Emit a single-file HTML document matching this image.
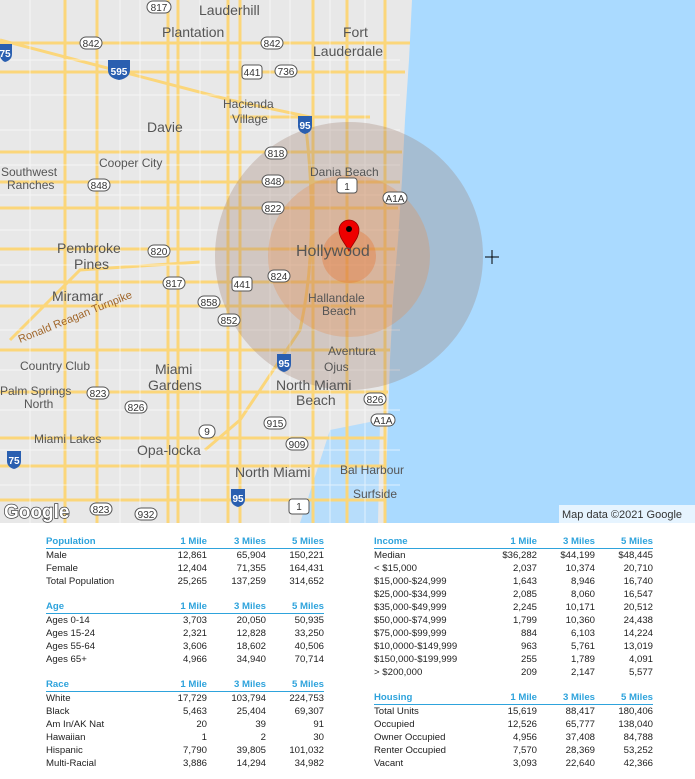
<!DOCTYPE html>
<html><head><meta charset="utf-8"><style>
body{margin:0;width:695px;height:779px;background:#fff;overflow:hidden;font-family:"Liberation Sans",sans-serif;position:relative}
svg text{font-family:"Liberation Sans",sans-serif}
.t{position:absolute;font-size:9.6px;color:#222;border-collapse:collapse}
.t td{padding:0;height:13px;line-height:13px;white-space:nowrap}
.t td.n{text-align:right}
.t tr.h td{color:#2ea3dc;font-weight:bold;border-bottom:1px solid #2ea3dc;height:12px}
.t tr.s td{height:12px}
</style></head><body>
<svg width="695" height="523" style="position:absolute;left:0;top:0" xmlns="http://www.w3.org/2000/svg">
<rect width="695" height="523" fill="#e8e8e8"/>
<path d="M412,0 L409,60 L405,120 L402,180 L398,240 L393,300 L390,360 L388,420 L386,480 L384,523 L695,523 L695,0Z" fill="#aadaff"/>
<path d="M330,430 L380,420 L378,523 L300,523 Z" fill="#aadaff" opacity=".8"/>
<g stroke="#fbd67a" stroke-width="3" fill="none">
<path d="M0,43 H410 M0,72 H405 M230,117 H370 M0,152 H402 M0,182 H400 M0,208 H398 M0,249 H395 M0,282 H393 M0,306 H392 M0,350 H390 M0,392 H388 M0,438 H386 M0,466 H386 M0,500 H385"/>
<path d="M65,0 V523 M168,0 V523 M228,0 V523 M240,0 V523 M313,0 V523 M347,0 V523 M385,0 V523 M97,0 V523 M178,0 V523"/>
<path d="M0,40 L230,100 L310,117 M305,120 Q320,240 300,330 L240,420 L240,523 M10,340 L80,270 L200,262 M240,420 L205,450"/>
</g>
<g stroke="#fff" stroke-width="1" opacity=".6" fill="none">
<path d="M0,60 H400 M0,95 H400 M0,130 H400 M0,165 H400 M0,195 H400 M0,230 H400 M0,265 H400 M0,330 H400 M0,370 H400 M0,410 H400 M0,450 H400 M0,485 H400 M30,0 V523 M120,0 V523 M140,0 V523 M200,0 V523 M270,0 V523 M290,0 V523 M330,0 V523 M365,0 V523"/>
</g>
<circle cx="349" cy="256" r="134" fill="#9a7a6a" opacity=".3"/>
<circle cx="349" cy="256" r="81" fill="#e88a4a" opacity=".3"/>
<circle cx="349" cy="256" r="27" fill="#e8702a" opacity=".35"/>
<circle cx="216" cy="256" r="0"/>
<path d="M349,251 C345,243 339,238 339,230 A10,10 0 0 1 359,230 C359,238 353,243 349,251Z" fill="#e00" stroke="#900" stroke-width=".8"/>
<circle cx="349" cy="229" r="3" fill="#000"/>
<path d="M492,250 V264 M485,257 H499" stroke="#000" stroke-width="1"/>
<g fill="#555" font-size="14">
<text x="199" y="15">Lauderhill</text>
<text x="162" y="37">Plantation</text>
<text x="343" y="37">Fort</text>
<text x="313" y="56">Lauderdale</text>
<text x="223" y="108" font-size="12">Hacienda</text>
<text x="232" y="123" font-size="12">Village</text>
<text x="147" y="132">Davie</text>
<text x="99" y="167" font-size="12">Cooper City</text>
<text x="1" y="176" font-size="12">Southwest</text>
<text x="7" y="189" font-size="12">Ranches</text>
<text x="310" y="176" font-size="12">Dania Beach</text>
<text x="296" y="256" font-size="16">Hollywood</text>
<text x="57" y="253">Pembroke</text>
<text x="74" y="269">Pines</text>
<text x="52" y="301">Miramar</text>
<text x="308" y="302" font-size="12">Hallandale</text>
<text x="322" y="315" font-size="12">Beach</text>
<text x="20" y="370" font-size="12">Country Club</text>
<text x="155" y="374">Miami</text>
<text x="148" y="390">Gardens</text>
<text x="328" y="355" font-size="12">Aventura</text>
<text x="324" y="371" font-size="12">Ojus</text>
<text x="276" y="390">North Miami</text>
<text x="296" y="405">Beach</text>
<text x="0" y="395" font-size="12">Palm Springs</text>
<text x="24" y="408" font-size="12">North</text>
<text x="34" y="443" font-size="12">Miami Lakes</text>
<text x="137" y="455">Opa-locka</text>
<text x="235" y="477">North Miami</text>
<text x="340" y="474" font-size="12">Bal Harbour</text>
<text x="353" y="498" font-size="12">Surfside</text>
<text x="20" y="343" font-size="11" fill="#a0662a" transform="rotate(-22 20 343)">Ronald Reagan Turnpike</text>
</g>
<g font-size="10" fill="#333" text-anchor="middle">
<g stroke="#555" fill="#fff" stroke-width="1">
<rect x="147" y="1" width="24" height="12" rx="6"/><rect x="80" y="37" width="22" height="12" rx="6"/><rect x="261" y="37" width="22" height="12" rx="6"/>
<rect x="275" y="65" width="22" height="12" rx="6"/><rect x="242" y="65" width="20" height="14" rx="3"/>
<rect x="265" y="147" width="22" height="12" rx="6"/><rect x="88" y="179" width="22" height="12" rx="6"/><rect x="262" y="175" width="22" height="12" rx="6"/><rect x="262" y="202" width="22" height="12" rx="6"/>
<rect x="148" y="245" width="22" height="12" rx="6"/><rect x="268" y="270" width="22" height="12" rx="6"/><rect x="232" y="277" width="20" height="14" rx="3"/><rect x="163" y="277" width="22" height="12" rx="6"/>
<rect x="198" y="296" width="22" height="12" rx="6"/><rect x="218" y="314" width="22" height="12" rx="6"/><rect x="337" y="178" width="20" height="15" rx="3"/><rect x="383" y="192" width="24" height="12" rx="6"/>
<rect x="87" y="387" width="22" height="12" rx="6"/><rect x="125" y="401" width="22" height="12" rx="6"/><rect x="364" y="393" width="22" height="12" rx="6"/><rect x="371" y="414" width="24" height="12" rx="6"/>
<rect x="264" y="417" width="22" height="12" rx="6"/><rect x="199" y="425" width="16" height="13" rx="6"/><rect x="286" y="438" width="22" height="12" rx="6"/><rect x="90" y="503" width="22" height="12" rx="6"/><rect x="135" y="508" width="22" height="12" rx="6"/><rect x="289" y="499" width="20" height="15" rx="3"/>
</g>
<text x="159" y="11">817</text><text x="91" y="47">842</text><text x="272" y="47">842</text><text x="286" y="75">736</text><text x="252" y="76">441</text>
<text x="276" y="157">818</text><text x="99" y="189">848</text><text x="273" y="185">848</text><text x="273" y="212">822</text>
<text x="159" y="255">820</text><text x="279" y="280">824</text><text x="242" y="288">441</text><text x="174" y="287">817</text>
<text x="209" y="306">858</text><text x="229" y="324">852</text><text x="347" y="190">1</text><text x="395" y="202">A1A</text>
<text x="98" y="397">823</text><text x="136" y="411">826</text><text x="375" y="403">826</text><text x="383" y="424">A1A</text>
<text x="275" y="427">915</text><text x="207" y="435">9</text><text x="297" y="448">909</text><text x="101" y="513">823</text><text x="146" y="518">932</text><text x="299" y="510">1</text>
</g>
<g font-size="10" fill="#fff" text-anchor="middle" font-weight="bold">
<path d="M108,60 h22 v10 q0,8 -11,10 q-11,-2 -11,-10z" fill="#2a5fb0"/><text x="119" y="75">595</text>
<path d="M298,116 h14 v10 q0,6 -7,8 q-7,-2 -7,-8z" fill="#2a5fb0"/><text x="305" y="129">95</text>
<path d="M277,354 h14 v10 q0,6 -7,8 q-7,-2 -7,-8z" fill="#2a5fb0"/><text x="284" y="367">95</text>
<path d="M231,489 h14 v10 q0,6 -7,8 q-7,-2 -7,-8z" fill="#2a5fb0"/><text x="238" y="502">95</text>
<path d="M7,451 h14 v10 q0,6 -7,8 q-7,-2 -7,-8z" fill="#2a5fb0"/><text x="14" y="464">75</text>
<path d="M0,44 h12 v10 q0,6 -7,8 q-5,-2 -5,-8z" fill="#2a5fb0"/><text x="5" y="57">75</text>
</g>
<text x="4" y="518" font-size="19" font-weight="bold" fill="#fff" stroke="#444" stroke-width="1.5" paint-order="stroke">Google</text>
<rect x="559" y="505" width="136" height="18" fill="#fff" opacity=".7"/>
<text x="562" y="518" font-size="11" fill="#333">Map data ©2021 Google</text>
</svg>

<table class="t" style="left:46px;top:535px;width:278px">
<tr class="h"><td>Population</td><td class="n" style="width:60px">1 Mile</td><td class="n" style="width:59px">3 Miles</td><td class="n" style="width:58px">5 Miles</td></tr>
<tr><td>Male</td><td class="n">12,861</td><td class="n">65,904</td><td class="n">150,221</td></tr>
<tr><td>Female</td><td class="n">12,404</td><td class="n">71,355</td><td class="n">164,431</td></tr>
<tr><td>Total Population</td><td class="n">25,265</td><td class="n">137,259</td><td class="n">314,652</td></tr>
<tr class="s"><td colspan="4"></td></tr>
<tr class="h"><td>Age</td><td class="n">1 Mile</td><td class="n">3 Miles</td><td class="n">5 Miles</td></tr>
<tr><td>Ages 0-14</td><td class="n">3,703</td><td class="n">20,050</td><td class="n">50,935</td></tr>
<tr><td>Ages 15-24</td><td class="n">2,321</td><td class="n">12,828</td><td class="n">33,250</td></tr>
<tr><td>Ages 55-64</td><td class="n">3,606</td><td class="n">18,602</td><td class="n">40,506</td></tr>
<tr><td>Ages 65+</td><td class="n">4,966</td><td class="n">34,940</td><td class="n">70,714</td></tr>
<tr class="s"><td colspan="4"></td></tr>
<tr class="h"><td>Race</td><td class="n">1 Mile</td><td class="n">3 Miles</td><td class="n">5 Miles</td></tr>
<tr><td>White</td><td class="n">17,729</td><td class="n">103,794</td><td class="n">224,753</td></tr>
<tr><td>Black</td><td class="n">5,463</td><td class="n">25,404</td><td class="n">69,307</td></tr>
<tr><td>Am In/AK Nat</td><td class="n">20</td><td class="n">39</td><td class="n">91</td></tr>
<tr><td>Hawaiian</td><td class="n">1</td><td class="n">2</td><td class="n">30</td></tr>
<tr><td>Hispanic</td><td class="n">7,790</td><td class="n">39,805</td><td class="n">101,032</td></tr>
<tr><td>Multi-Racial</td><td class="n">3,886</td><td class="n">14,294</td><td class="n">34,982</td></tr>
</table>

<table class="t" style="left:374px;top:535px;width:279px">
<tr class="h"><td>Income</td><td class="n" style="width:60px">1 Mile</td><td class="n" style="width:58px">3 Miles</td><td class="n" style="width:58px">5 Miles</td></tr>
<tr><td>Median</td><td class="n">$36,282</td><td class="n">$44,199</td><td class="n">$48,445</td></tr>
<tr><td>&lt; $15,000</td><td class="n">2,037</td><td class="n">10,374</td><td class="n">20,710</td></tr>
<tr><td>$15,000-$24,999</td><td class="n">1,643</td><td class="n">8,946</td><td class="n">16,740</td></tr>
<tr><td>$25,000-$34,999</td><td class="n">2,085</td><td class="n">8,060</td><td class="n">16,547</td></tr>
<tr><td>$35,000-$49,999</td><td class="n">2,245</td><td class="n">10,171</td><td class="n">20,512</td></tr>
<tr><td>$50,000-$74,999</td><td class="n">1,799</td><td class="n">10,360</td><td class="n">24,438</td></tr>
<tr><td>$75,000-$99,999</td><td class="n">884</td><td class="n">6,103</td><td class="n">14,224</td></tr>
<tr><td>$10,0000-$149,999</td><td class="n">963</td><td class="n">5,761</td><td class="n">13,019</td></tr>
<tr><td>$150,000-$199,999</td><td class="n">255</td><td class="n">1,789</td><td class="n">4,091</td></tr>
<tr><td>&gt; $200,000</td><td class="n">209</td><td class="n">2,147</td><td class="n">5,577</td></tr>
<tr class="s"><td colspan="4"></td></tr>
<tr class="h"><td>Housing</td><td class="n">1 Mile</td><td class="n">3 Miles</td><td class="n">5 Miles</td></tr>
<tr><td>Total Units</td><td class="n">15,619</td><td class="n">88,417</td><td class="n">180,406</td></tr>
<tr><td>Occupied</td><td class="n">12,526</td><td class="n">65,777</td><td class="n">138,040</td></tr>
<tr><td>Owner Occupied</td><td class="n">4,956</td><td class="n">37,408</td><td class="n">84,788</td></tr>
<tr><td>Renter Occupied</td><td class="n">7,570</td><td class="n">28,369</td><td class="n">53,252</td></tr>
<tr><td>Vacant</td><td class="n">3,093</td><td class="n">22,640</td><td class="n">42,366</td></tr>
</table>
</body></html>
